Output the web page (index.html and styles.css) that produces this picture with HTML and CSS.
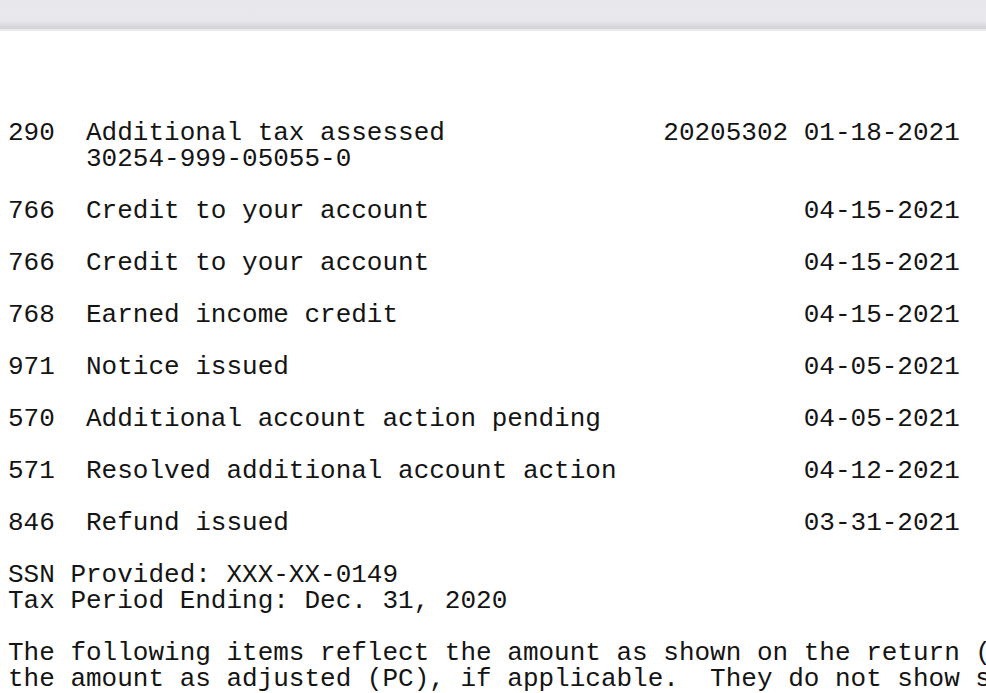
FILE: index.html
```html
<!DOCTYPE html>
<html lang="en">
<head>
    <meta charset="UTF-8">
    <meta name="viewport" content="width=device-width, initial-scale=1.0">
    <title>Account Transcript</title>
    <link rel="stylesheet" href="styles.css">
</head>
<body>
    <div class="toolbar"></div>

    <div class="page">
<pre class="transcript">290  Additional tax assessed              20205302 01-18-2021
     30254-999-05055-0

766  Credit to your account                        04-15-2021

766  Credit to your account                        04-15-2021

768  Earned income credit                          04-15-2021

971  Notice issued                                 04-05-2021

570  Additional account action pending             04-05-2021

571  Resolved additional account action            04-12-2021

846  Refund issued                                 03-31-2021

SSN Provided: XXX-XX-0149
Tax Period Ending: Dec. 31, 2020

The following items reflect the amount as shown on the return (PR), and
the amount as adjusted (PC), if applicable.  They do not show subsequent</pre>
    </div>
</body>
</html>
```

FILE: styles.css
```css
body {
    margin: 0;
    background-color: #ffffff;
    overflow: hidden;
    height: 100vh;
}
.toolbar {
    height: 29px;
    background: linear-gradient(to bottom, #e8e7ec 0%, #e9e8ed 70%, #d2d1d6 100%);
    border-bottom: 2px solid #ebebef;
}
.page {
    padding: 89px 0 0 8px;
    overflow: hidden;
}
.transcript {
    margin: 0;
    font-family: "Liberation Mono", "Courier New", monospace;
    font-size: 26px;
    line-height: 26px;
    color: #141414;
    white-space: pre;
}
```
